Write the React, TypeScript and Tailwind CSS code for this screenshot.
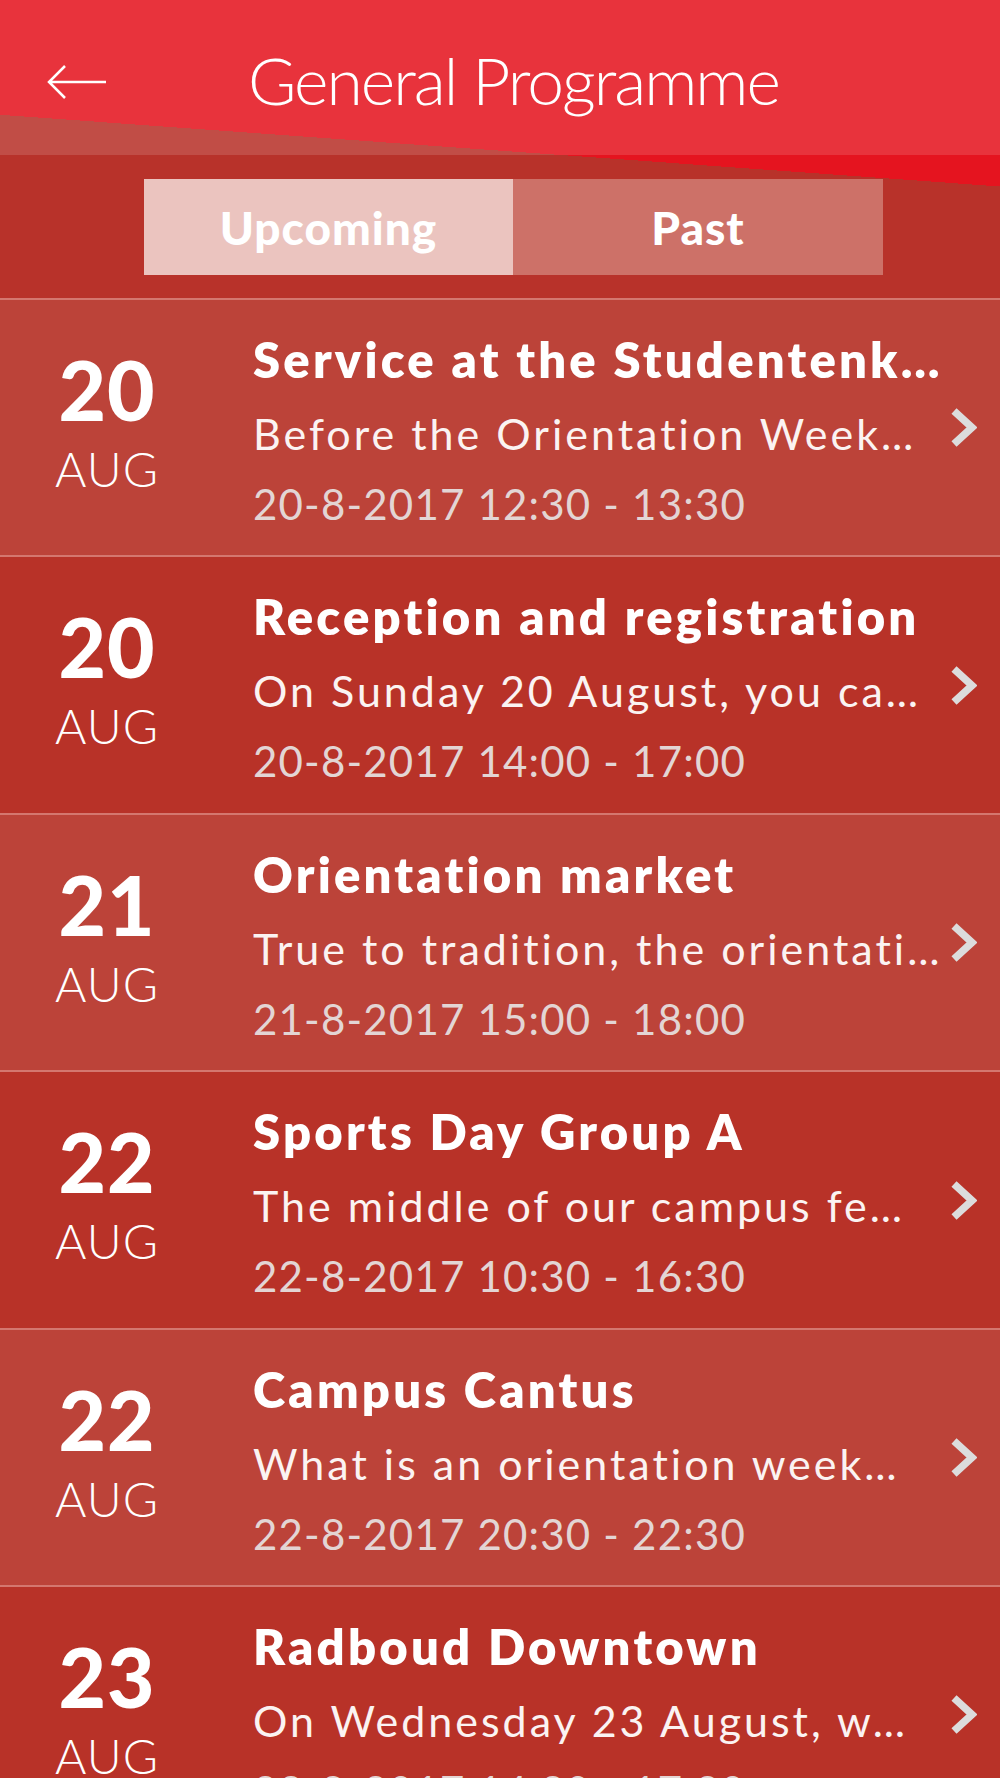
import React from 'react';

type Item = {
  day: string;
  month: string;
  title: string;
  summary: string;
  when: string;
};

const items: Item[] = [
  { day: '20', month: 'AUG', title: 'Service at the Studentenk…', summary: 'Before the Orientation Week…', when: '20-8-2017 12:30 - 13:30' },
  { day: '20', month: 'AUG', title: 'Reception and registration', summary: 'On Sunday 20 August, you ca…', when: '20-8-2017 14:00 - 17:00' },
  { day: '21', month: 'AUG', title: 'Orientation market', summary: 'True to tradition, the orientati…', when: '21-8-2017 15:00 - 18:00' },
  { day: '22', month: 'AUG', title: 'Sports Day Group A', summary: 'The middle of our campus fe…', when: '22-8-2017 10:30 - 16:30' },
  { day: '22', month: 'AUG', title: 'Campus Cantus', summary: 'What is an orientation week…', when: '22-8-2017 20:30 - 22:30' },
  { day: '23', month: 'AUG', title: 'Radboud Downtown', summary: 'On Wednesday 23 August, w…', when: '23-8-2017 14:30 - 17:30' },
];

const rowHeights = ['h-[257px]', 'h-[258px]', 'h-[257px]', 'h-[258px]', 'h-[257px]', 'h-[257px]'];

const Chevron = () => (
  <svg width="27" height="41" viewBox="0 0 27 41" className="shrink-0">
    <polyline points="4,4 22,20.5 4,37" fill="none" stroke="#dcdcdc" strokeWidth="7.5" />
  </svg>
);

const Row: React.FC<{ item: Item; index: number }> = ({ item, index }) => {
  const light = index % 2 === 0;
  return (
    <div
      className={`${rowHeights[index]} shrink-0 flex border-t-2 border-[#d4776f] ${
        light ? 'bg-[#bc4339]' : 'bg-[#b83228]'
      }`}
    >
      {/* Date */}
      <div className="w-[214px] shrink-0 flex flex-col items-center pt-[49px] text-white">
        <span className="text-[82px] leading-[80px] font-black tracking-[1px]">{item.day}</span>
        <span className="mt-[16px] text-[48px] leading-[48px] font-light tracking-[1px]">{item.month}</span>
      </div>

      {/* Text */}
      <div className="ml-[39px] w-[692px] shrink-0 pt-[23px] overflow-hidden whitespace-nowrap">
        <div className="text-[49px] leading-[72px] font-extrabold text-white tracking-[3.2px]">{item.title}</div>
        <div className="mt-[3px] text-[43px] leading-[72px] text-[#fbf3f2] tracking-[3px]">{item.summary}</div>
        <div className="-mt-[2px] text-[42px] leading-[72px] text-[#e3d5d4] tracking-[1.2px]">{item.when}</div>
      </div>

      <div className="ml-[5px] self-center">
        <Chevron />
      </div>
    </div>
  );
};

const App: React.FC = () => {
  return (
    <div className="w-[1000px] h-[1778px] overflow-hidden flex flex-col bg-[#b83228] font-['Lato',sans-serif]">
      {/* Top area with diagonal */}
      <div className="h-[298px] shrink-0 bg-[linear-gradient(184.1deg,#e5141f_186px,#b8322a_186px)]">
        <div className="h-[155px] bg-white/[0.13] flex items-start">
          <svg width="60" height="36" viewBox="0 0 60 36" className="ml-[47px] mt-[64px]">
            <path d="M59 18H2M18 2L2 18l16 16" fill="none" stroke="white" strokeWidth="2.5" />
          </svg>
          <h1 className="ml-[141px] mt-[40px] text-[66px] leading-[80px] font-light text-white tracking-[-2px]">
            General Programme
          </h1>
        </div>

        {/* Segmented control */}
        <div className="mt-[24px] ml-[144px] flex w-[739px] h-[96px]">
          <div className="w-[369px] bg-[#ebc4bf] flex items-center justify-center">
            <span className="text-[46px] font-black text-white tracking-[1px]">Upcoming</span>
          </div>
          <div className="flex-1 bg-[#cd7168] flex items-center justify-center">
            <span className="text-[46px] font-black text-white tracking-[1px]">Past</span>
          </div>
        </div>
      </div>

      {/* Event list */}
      {items.map((item, i) => (
        <Row key={i} item={item} index={i} />
      ))}
    </div>
  );
};

export default App;
